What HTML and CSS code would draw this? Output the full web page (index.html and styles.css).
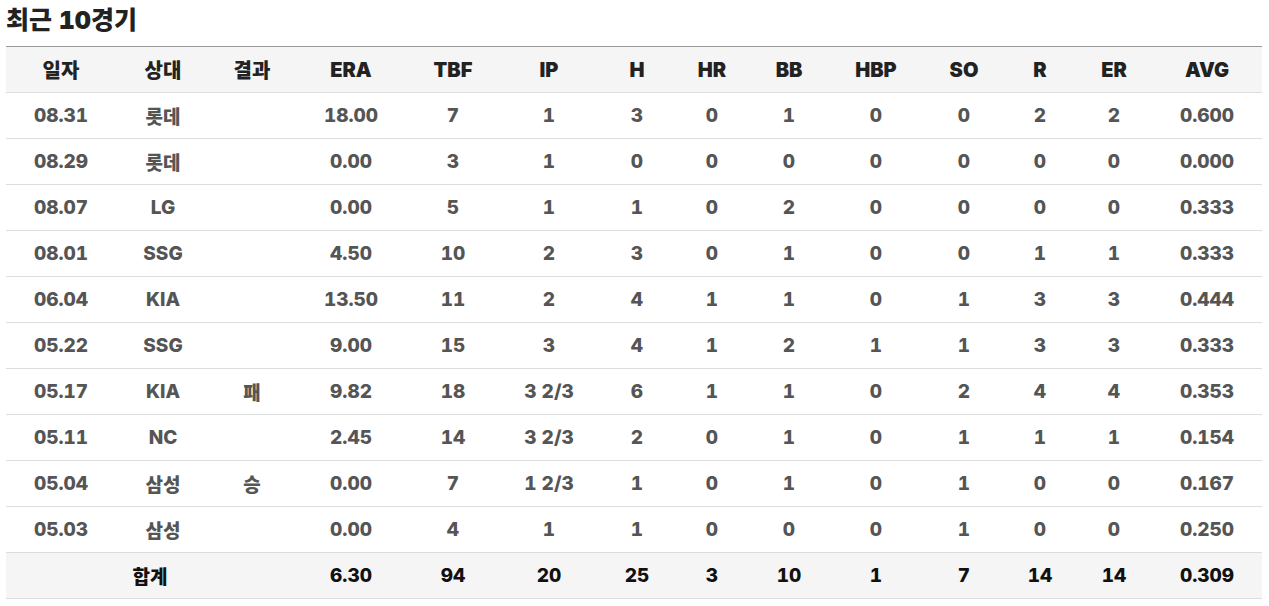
FILE: index.html
```html
<!DOCTYPE html>
<html lang="ko">
<head>
<meta charset="utf-8">
<link rel="stylesheet" href="styles.css">
</head>
<body>
<div class="wrap">
  <h2 class="title">최근 10경기</h2>
  <table class="stats">
    <colgroup>
      <col class="c1"><col class="c2"><col class="c3"><col class="c4"><col class="c5"><col class="c6"><col class="c7">
      <col class="c8"><col class="c9"><col class="c10"><col class="c11"><col class="c12"><col class="c13"><col class="c14">
    </colgroup>
    <thead>
      <tr><th>일자</th><th>상대</th><th>결과</th><th>ERA</th><th>TBF</th><th>IP</th><th>H</th><th>HR</th><th>BB</th><th>HBP</th><th>SO</th><th>R</th><th>ER</th><th>AVG</th></tr>
    </thead>
    <tbody>
      <tr><td>08.31</td><td>롯데</td><td></td><td>18.00</td><td>7</td><td>1</td><td>3</td><td>0</td><td>1</td><td>0</td><td>0</td><td>2</td><td>2</td><td>0.600</td></tr>
      <tr><td>08.29</td><td>롯데</td><td></td><td>0.00</td><td>3</td><td>1</td><td>0</td><td>0</td><td>0</td><td>0</td><td>0</td><td>0</td><td>0</td><td>0.000</td></tr>
      <tr><td>08.07</td><td>LG</td><td></td><td>0.00</td><td>5</td><td>1</td><td>1</td><td>0</td><td>2</td><td>0</td><td>0</td><td>0</td><td>0</td><td>0.333</td></tr>
      <tr><td>08.01</td><td>SSG</td><td></td><td>4.50</td><td>10</td><td>2</td><td>3</td><td>0</td><td>1</td><td>0</td><td>0</td><td>1</td><td>1</td><td>0.333</td></tr>
      <tr><td>06.04</td><td>KIA</td><td></td><td>13.50</td><td>11</td><td>2</td><td>4</td><td>1</td><td>1</td><td>0</td><td>1</td><td>3</td><td>3</td><td>0.444</td></tr>
      <tr><td>05.22</td><td>SSG</td><td></td><td>9.00</td><td>15</td><td>3</td><td>4</td><td>1</td><td>2</td><td>1</td><td>1</td><td>3</td><td>3</td><td>0.333</td></tr>
      <tr><td>05.17</td><td>KIA</td><td>패</td><td>9.82</td><td>18</td><td>3 2/3</td><td>6</td><td>1</td><td>1</td><td>0</td><td>2</td><td>4</td><td>4</td><td>0.353</td></tr>
      <tr><td>05.11</td><td>NC</td><td></td><td>2.45</td><td>14</td><td>3 2/3</td><td>2</td><td>0</td><td>1</td><td>0</td><td>1</td><td>1</td><td>1</td><td>0.154</td></tr>
      <tr><td>05.04</td><td>삼성</td><td>승</td><td>0.00</td><td>7</td><td>1 2/3</td><td>1</td><td>0</td><td>1</td><td>0</td><td>1</td><td>0</td><td>0</td><td>0.167</td></tr>
      <tr><td>05.03</td><td>삼성</td><td></td><td>0.00</td><td>4</td><td>1</td><td>1</td><td>0</td><td>0</td><td>0</td><td>1</td><td>0</td><td>0</td><td>0.250</td></tr>
    </tbody>
    <tfoot>
      <tr><td colspan="3">합계</td><td>6.30</td><td>94</td><td>20</td><td>25</td><td>3</td><td>10</td><td>1</td><td>7</td><td>14</td><td>14</td><td>0.309</td></tr>
    </tfoot>
  </table>
</div>
</body>
</html>
```

FILE: styles.css
```css
html, body {
  margin: 0;
  padding: 0;
  background: #fff;
}
body {
  font-family: Inter, "Noto Sans CJK KR", sans-serif;
  font-variant-numeric: tabular-nums;
}
.wrap {
  padding: 0 7px 0 6px;
}
.title {
  margin: 0;
  height: 46px;
  box-sizing: border-box;
  padding-top: 4px;
  font-size: 25px;
  font-weight: 900;
  color: #222;
  line-height: 32px;
  letter-spacing: 0;
}
.stats {
  width: 100%;
  border-collapse: collapse;
  table-layout: fixed;
  border-top: 1px solid #999;
}
.c1 { width: 110px; }
.c2 { width: 94px; }
.c3 { width: 84px; }
.c4 { width: 114px; }
.c5 { width: 90px; }
.c6 { width: 102px; }
.c7 { width: 74px; }
.c8 { width: 76px; }
.c9 { width: 78px; }
.c10 { width: 96px; }
.c11 { width: 80px; }
.c12 { width: 72px; }
.c13 { width: 76px; }
.c14 { width: 110px; }
.stats th, .stats td {
  height: 45px;
  padding: 0;
  text-align: center;
  vertical-align: middle;
  border-bottom: 1px solid #ddd;
  font-size: 19px;
  font-weight: 800;
  white-space: nowrap;
}
.stats th {
  background: #f5f5f5;
  color: #222;
  font-size: 20px;
  font-weight: 900;
}
.stats tbody td {
  color: #555;
}
.stats tfoot td {
  background: #f5f5f5;
  color: #111;
}
```
